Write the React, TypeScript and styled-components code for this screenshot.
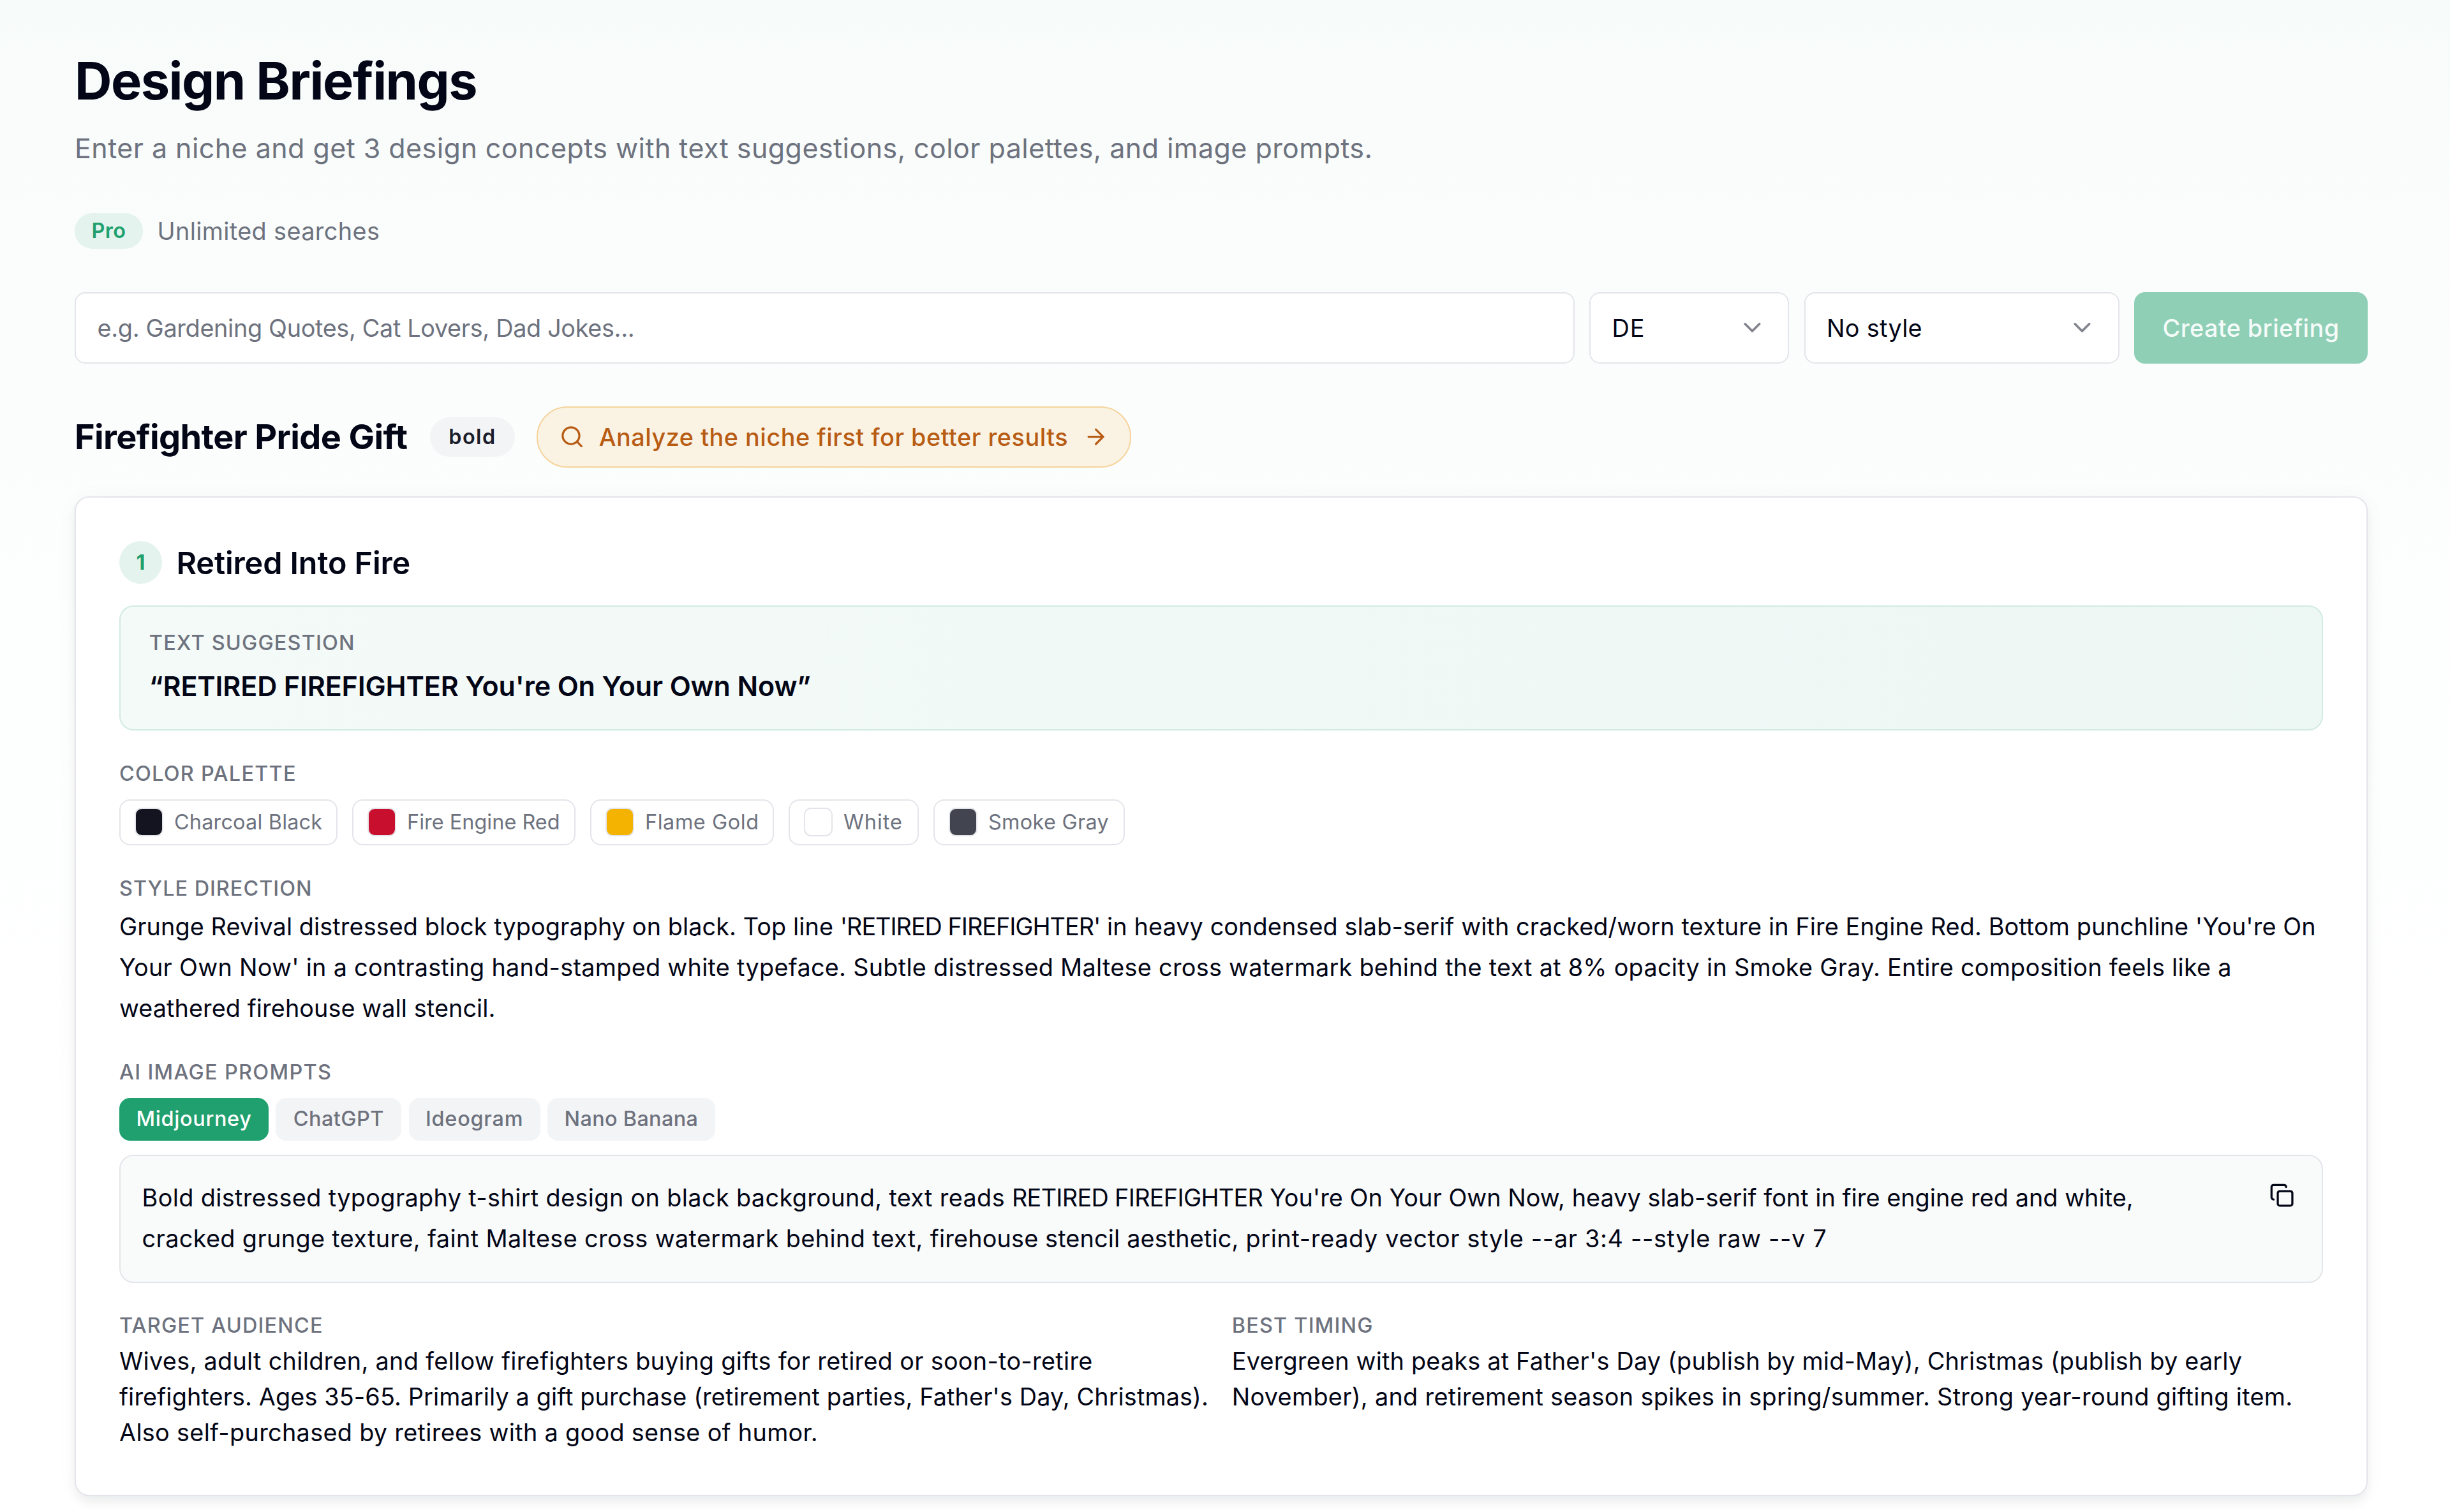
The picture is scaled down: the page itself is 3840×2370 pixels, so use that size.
import React, { useState } from "react";
import styled, { createGlobalStyle } from "styled-components";
import { ArrowRight, ChevronDown, Copy, Search } from "lucide-react";

const color = {
  ink: "#030616",
  muted: "#6d727e",
  line: "#e4e5ea",
  green: "#1fa06e",
  greenSoft: "#e4f3ed",
  chip: "#f3f4f6",
  amber: "#b85c14",
};

const GlobalStyle = createGlobalStyle`
  *, *::before, *::after { box-sizing: border-box; }
  body {
    margin: 0;
    background: #ffffff;
    color: ${color.ink};
    font-family: "Inter", "Liberation Sans", sans-serif;
    font-size: 37.8px;
    line-height: 56px;
  }
  h1, h2, h3, p { margin: 0; }
  button, input { font: inherit; color: inherit; margin: 0; }
`;

const Page = styled.main`
  min-height: 2370px;
  padding: 81.5px 129px 25px 117px;
  display: flex;
  flex-direction: column;
  background: linear-gradient(180deg, #f7fbfa 0, #fafdfc 420px, #fdfefe 1000px, #ffffff 1700px);
`;

/* ---------- header ---------- */

const PageTitle = styled.h1`
  font-size: 81px;
  font-weight: 700;
  line-height: 90px;
  letter-spacing: -0.0185em;
`;

const Subtitle = styled.p`
  margin-top: 26px;
  font-size: 43px;
  line-height: 68px;
  letter-spacing: 0.0103em;
  color: ${color.muted};
`;

const PlanRow = styled.div`
  margin-top: 68.5px;
  display: flex;
  align-items: center;
  gap: 22.5px;
  height: 56px;
  color: ${color.muted};
  letter-spacing: 0.01em;
`;

const PlanBadge = styled.span`
  display: flex;
  align-items: center;
  justify-content: center;
  width: 107px;
  height: 56px;
  border-radius: 28px;
  background: ${color.greenSoft};
  color: ${color.green};
  font-size: 32.4px;
  font-weight: 600;
`;

/* ---------- search form ---------- */

const Form = styled.form`
  margin-top: 67.5px;
  display: flex;
  gap: 23.5px;
  height: 112.5px;
`;

const NicheInput = styled.input`
  flex: 1;
  min-width: 0;
  padding: 0 33.6px;
  border: 2px solid ${color.line};
  border-radius: 16.8px;
  background: #ffffff;
  outline: none;
  letter-spacing: -0.0088em;
  &::placeholder {
    color: ${color.muted};
    opacity: 1;
  }
`;

const SelectTrigger = styled.button<{ $width: number; $track: number }>`
  display: flex;
  align-items: center;
  justify-content: space-between;
  width: ${(p) => p.$width}px;
  padding: 0 33.6px;
  border: 2px solid ${color.line};
  border-radius: 16.8px;
  background: #ffffff;
  letter-spacing: ${(p) => p.$track}em;
  svg {
    color: #83858e;
  }
`;

const SubmitButton = styled.button`
  width: 366px;
  padding: 0;
  border: 0;
  border-radius: 16.8px;
  background: #8ecfb6;
  color: #f5fbf8;
  font-weight: 500;
  letter-spacing: 0.011em;
`;

/* ---------- result heading ---------- */

const ResultHeader = styled.div`
  margin-top: 67px;
  display: flex;
  align-items: center;
  height: 96px;
`;

const NicheName = styled.h2`
  width: 523px;
  font-size: 54px;
  font-weight: 700;
  line-height: 78px;
  letter-spacing: -0.0115em;
  white-space: nowrap;
`;

const StyleTag = styled.span`
  display: flex;
  align-items: center;
  justify-content: center;
  margin-left: 34px;
  width: 133px;
  height: 62px;
  border-radius: 31px;
  background: ${color.chip};
  color: #1b1d2b;
  font-size: 32.4px;
  font-weight: 600;
  letter-spacing: 0.045em;
`;

const AnalyzeLink = styled.a`
  display: flex;
  align-items: center;
  gap: 23px;
  margin-left: 34px;
  width: 932px;
  height: 96px;
  padding: 0 33.6px;
  border: 2.5px solid #f5d39b;
  border-radius: 48px;
  background: #faf3e4;
  color: ${color.amber};
  font-weight: 500;
  letter-spacing: 0.0135em;
  white-space: nowrap;
  svg {
    flex: none;
  }
  svg:last-child {
    margin-left: auto;
  }
`;

/* ---------- concept card ---------- */

const Card = styled.article`
  margin-top: 45px;
  height: 1567px;
  padding: 68px;
  border: 2px solid ${color.line};
  border-radius: 22.4px;
  background: #ffffff;
  box-shadow: 0 11px 17px -3px rgba(16, 24, 40, 0.07), 0 2px 34px rgba(16, 24, 40, 0.035);
  display: flex;
  flex-direction: column;
`;

const ConceptHeader = styled.header`
  display: flex;
  align-items: center;
  gap: 22.4px;
  height: 67px;
`;

const ConceptNumber = styled.span`
  display: flex;
  align-items: center;
  justify-content: center;
  width: 67px;
  height: 67px;
  border-radius: 50%;
  background: ${color.greenSoft};
  color: ${color.green};
  font-size: 32.4px;
  font-weight: 700;
`;

const ConceptTitle = styled.h3`
  padding-top: 1px;
  font-size: 48.5px;
  font-weight: 600;
  line-height: 67px;
  letter-spacing: -0.002em;
`;

const Label = styled.h4<{ $track: number }>`
  margin: 0;
  color: ${color.muted};
  font-size: 32.4px;
  font-weight: 500;
  line-height: 45px;
  letter-spacing: ${(p) => p.$track}em;
  text-transform: uppercase;
`;

const Suggestion = styled.section`
  margin-top: 34px;
  height: 196px;
  padding: 33.5px 44.8px;
  border: 2px solid #d1ebe0;
  border-radius: 22.4px;
  background: linear-gradient(90deg, #f4faf8, #edf7f4);
`;

const SuggestionText = styled.p`
  margin-top: 12px;
  font-size: 43px;
  font-weight: 600;
  line-height: 67px;
  letter-spacing: -0.003em;
`;

const Section = styled.section<{ $top: number }>`
  margin-top: ${(p) => p.$top}px;
`;

const Palette = styled.ul`
  margin: 17.5px 0 1px;
  padding: 0;
  list-style: none;
  display: flex;
  gap: 23px;
`;

const PaletteChip = styled.li<{ $width: number; $track: number }>`
  display: flex;
  align-items: center;
  gap: 16.8px;
  width: ${(p) => p.$width}px;
  height: 72px;
  padding: 0 22.4px;
  border: 2px solid ${color.line};
  border-radius: 16.8px;
  color: ${color.muted};
  font-size: 32.4px;
  letter-spacing: ${(p) => p.$track}em;
  white-space: nowrap;
`;

const Swatch = styled.span<{ $fill: string }>`
  flex: none;
  width: 44.8px;
  height: 44.8px;
  border: 2px solid ${color.line};
  border-radius: 11.2px;
  background: ${(p) => p.$fill};
`;

const Paragraph = styled.p<{ $leading: number }>`
  line-height: ${(p) => p.$leading}px;
`;

const TextLine = styled.span`
  display: block;
  white-space: nowrap;
`;

const TextRun = styled.span<{ $track: number }>`
  letter-spacing: ${(p) => p.$track}em;
`;

const Tabs = styled.div`
  margin-top: 17.5px;
  display: flex;
  gap: 11.3px;
`;

const Tab = styled.button<{ $active: boolean; $width: number; $track: number }>`
  width: ${(p) => p.$width}px;
  height: 67.5px;
  padding: 0;
  border: 0;
  border-radius: 16.8px;
  background: ${(p) => (p.$active ? color.green : color.chip)};
  color: ${(p) => (p.$active ? "#ffffff" : color.muted)};
  font-size: 32.4px;
  font-weight: 500;
  letter-spacing: ${(p) => p.$track}em;
`;

const PromptBox = styled.div`
  margin-top: 22px;
  height: 200.5px;
  padding: 34px 33.6px;
  border: 2px solid ${color.line};
  border-radius: 22.4px;
  background: #f9fafa;
  display: flex;
  align-items: flex-start;
  justify-content: space-between;
`;

const CopyButton = styled.button`
  display: flex;
  align-items: center;
  justify-content: center;
  flex: none;
  width: 57px;
  height: 56px;
  padding: 0;
  border: 0;
  background: transparent;
`;

const Insights = styled.div`
  margin-top: 44.5px;
  display: grid;
  grid-template-columns: 1fr 1fr;
  gap: 33.6px;
`;

type Run = [text: string, track: number];

const palette = [
  { name: "Charcoal Black", fill: "#13141f", width: 342, track: 0.006 },
  { name: "Fire Engine Red", fill: "#c8102e", width: 350, track: 0.001 },
  { name: "Flame Gold", fill: "#f5b301", width: 288, track: 0.018 },
  { name: "White", fill: "#ffffff", width: 204, track: 0.03 },
  { name: "Smoke Gray", fill: "#42454f", width: 300, track: 0.01 },
];

const tools = [
  { name: "Midjourney", width: 234, track: 0.02 },
  { name: "ChatGPT", width: 197, track: 0.015 },
  { name: "Ideogram", width: 206, track: 0.024 },
  { name: "Nano Banana", width: 263, track: 0.01 },
];

const styleDirection: Run[][] = [
  [
    ["Grunge Revival distressed block typography on black. Top line ", 0.0024],
    ["'RETIRED FIREFIGHTER'", -0.027],
    [" in heavy condensed slab-serif with cracked/worn texture in Fire Engine Red. Bottom punchline 'You're On", 0.0028],
  ],
  [
    ["Your Own Now' in a contrasting hand-stamped white typeface. Subtle distressed Maltese cross watermark behind the text at 8% opacity in Smoke Gray. Entire composition feels like a", 0.0074],
  ],
  [["weathered firehouse wall stencil.", 0.002]],
];

const prompt: Run[][] = [
  [
    ["Bold distressed typography t-shirt design on black background, text reads ", 0.0097],
    ["RETIRED FIREFIGHTER", -0.018],
    [" You're On Your Own Now, heavy slab-serif font in fire engine red and white,", 0.001],
  ],
  [
    ["cracked grunge texture, faint Maltese cross watermark behind text, ", 0.0097],
    ["firehouse stencil aesthetic, ", 0.004],
    ["print-ready vector style ", 0.0175],
    ["--ar 3:4 --style raw --v 7", 0.0175],
  ],
];

const audience: Run[][] = [
  [["Wives, adult children, and fellow firefighters buying gifts for retired or soon-to-retire", 0.0079]],
  [["firefighters. Ages 35-65. Primarily a gift purchase (retirement parties, Father's Day, Christmas).", 0.0031]],
  [["Also self-purchased by retirees with a good sense of humor.", 0.0082]],
];

const timing: Run[][] = [
  [["Evergreen with peaks at Father's Day (publish by mid-May), Christmas (publish by early", 0.0054]],
  [["November), and retirement season spikes in spring/summer. Strong year-round gifting item.", 0.0081]],
];

function TextBlock({ lines, leading }: { lines: Run[][]; leading: number }) {
  return (
    <Paragraph $leading={leading}>
      {lines.map((runs, i) => (
        <TextLine key={i}>
          {runs.map(([text, track]) => (
            <TextRun key={text} $track={track}>
              {text}
            </TextRun>
          ))}
        </TextLine>
      ))}
    </Paragraph>
  );
}

export default function App() {
  const [tool, setTool] = useState("Midjourney");

  return (
    <>
      <GlobalStyle />
      <Page>
        <PageTitle>Design Briefings</PageTitle>
        <Subtitle>
          Enter a niche and get 3 design concepts with text suggestions, color palettes, and image prompts.
        </Subtitle>
        <PlanRow>
          <PlanBadge>Pro</PlanBadge>
          Unlimited searches
        </PlanRow>

        <Form onSubmit={(e) => e.preventDefault()}>
          <NicheInput placeholder="e.g. Gardening Quotes, Cat Lovers, Dad Jokes..." />
          <SelectTrigger type="button" $width={313} $track={0.02}>
            DE
            <ChevronDown size={44.8} />
          </SelectTrigger>
          <SelectTrigger type="button" $width={494} $track={0.008}>
            No style
            <ChevronDown size={44.8} />
          </SelectTrigger>
          <SubmitButton>Create briefing</SubmitButton>
        </Form>

        <ResultHeader>
          <NicheName>Firefighter Pride Gift</NicheName>
          <StyleTag>bold</StyleTag>
          <AnalyzeLink>
            <Search size={39.2} />
            Analyze the niche first for better results
            <ArrowRight size={39.2} />
          </AnalyzeLink>
        </ResultHeader>

        <Card>
          <ConceptHeader>
            <ConceptNumber>1</ConceptNumber>
            <ConceptTitle>Retired Into Fire</ConceptTitle>
          </ConceptHeader>

          <Suggestion>
            <Label $track={0.037}>Text suggestion</Label>
            <SuggestionText>“RETIRED FIREFIGHTER You're On Your Own Now”</SuggestionText>
          </Suggestion>

          <Section $top={45}>
            <Label $track={0.039}>Color palette</Label>
            <Palette>
              {palette.map((c) => (
                <PaletteChip key={c.name} $width={c.width} $track={c.track}>
                  <Swatch $fill={c.fill} />
                  {c.name}
                </PaletteChip>
              ))}
            </Palette>
          </Section>

          <Section $top={44.5}>
            <Label $track={0.031}>Style direction</Label>
            <Section $top={5}>
              <TextBlock lines={styleDirection} leading={64} />
            </Section>
          </Section>

          <Section $top={46}>
            <Label $track={0.041}>AI image prompts</Label>
            <Tabs>
              {tools.map((t) => (
                <Tab
                  key={t.name}
                  $active={t.name === tool}
                  $width={t.width}
                  $track={t.track}
                  onClick={() => setTool(t.name)}
                >
                  {t.name}
                </Tab>
              ))}
            </Tabs>
            <PromptBox>
              <TextBlock lines={prompt} leading={63.5} />
              <CopyButton aria-label="Copy prompt">
                <Copy size={39.2} />
              </CopyButton>
            </PromptBox>
          </Section>

          <Insights>
            <div>
              <Label $track={0.037}>Target audience</Label>
              <Section $top={5}>
                <TextBlock lines={audience} leading={56} />
              </Section>
            </div>
            <div>
              <Label $track={0.037}>Best timing</Label>
              <Section $top={5}>
                <TextBlock lines={timing} leading={56} />
              </Section>
            </div>
          </Insights>
        </Card>
      </Page>
    </>
  );
}
